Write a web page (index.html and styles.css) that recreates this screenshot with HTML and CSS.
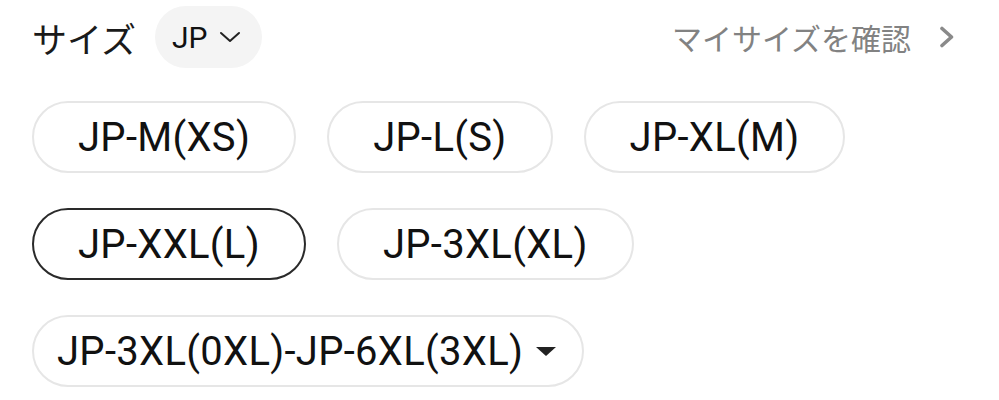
FILE: index.html
```html
<!DOCTYPE html>
<html lang="ja">
    <head>
        <meta charset="UTF-8" />
        <meta name="viewport" content="width=device-width, initial-scale=1.0" />
        <title>サイズ</title>
        <link rel="stylesheet" href="styles.css">
    </head>
    <body>
        <div class="size-head">
            <div class="size-label">サイズ</div>
            <button class="region-btn">
                JP
                <svg class="region-caret" width="22" height="12" viewBox="0 0 22 12">
                    <path d="M2 2 L11 10 L20 2" fill="none" stroke="#222" stroke-width="2" stroke-linecap="round" stroke-linejoin="round" />
                </svg>
            </button>
            <a class="my-size" href="#">
                マイサイズを確認
                <svg class="my-size-arrow" width="16" height="22" viewBox="0 0 16 22">
                    <path d="M3 2.5 L12.5 11 L3 19.5" fill="none" stroke="#8a8a8a" stroke-width="3.6" stroke-linecap="round" stroke-linejoin="round" />
                </svg>
            </a>
        </div>
        <div class="size-list">
            <button class="size-btn">JP-M(XS)</button>
            <button class="size-btn">JP-L(S)</button>
            <button class="size-btn">JP-XL(M)</button>
            <button class="size-btn selected">JP-XXL(L)</button>
            <button class="size-btn">JP-3XL(XL)</button>
            <button class="size-btn range">
                JP-3XL(0XL)-JP-6XL(3XL)
                <span class="range-caret"></span>
            </button>
        </div>
    </body>
</html>
```

FILE: styles.css
```css
body {
    margin: 0;
    padding: 6px 44px 0 32px;
    background-color: #ffffff;
    font-family: Roboto, "Noto Sans CJK JP", sans-serif;
    color: #111111;
}
button {
    font-family: inherit;
    cursor: pointer;
}
.size-head {
    display: flex;
    align-items: center;
    height: 62px;
}
.size-label {
    font-family: "Noto Sans CJK JP", sans-serif;
    font-size: 35px;
    color: #1a1a1a;
}
.region-btn {
    display: flex;
    align-items: center;
    gap: 12px;
    height: 62px;
    margin-left: 19px;
    padding: 0 21px 0 17px;
    border: none;
    border-radius: 31px;
    background-color: #f4f4f4;
    font-size: 30px;
    color: #111111;
}
.my-size {
    display: flex;
    align-items: center;
    gap: 28px;
    margin-left: auto;
    text-decoration: none;
    font-family: "Noto Sans CJK JP", sans-serif;
    font-size: 30px;
    color: #828282;
}
.size-list {
    display: flex;
    flex-wrap: wrap;
    column-gap: 31px;
    row-gap: 35px;
    margin-top: 33px;
}
.size-btn {
    display: flex;
    align-items: center;
    height: 72px;
    padding: 0 44px;
    border: 2px solid #e6e6e6;
    border-radius: 36px;
    background-color: #ffffff;
    font-size: 40px;
    letter-spacing: 0.3px;
    color: #111111;
}
.size-btn.selected {
    border-color: #2a2a2a;
}
.size-btn.range {
    padding: 0 26px 0 23px;
    gap: 13px;
}
.range-caret {
    width: 0;
    height: 0;
    border-left: 10px solid transparent;
    border-right: 10px solid transparent;
    border-top: 9px solid #222222;
}
```
